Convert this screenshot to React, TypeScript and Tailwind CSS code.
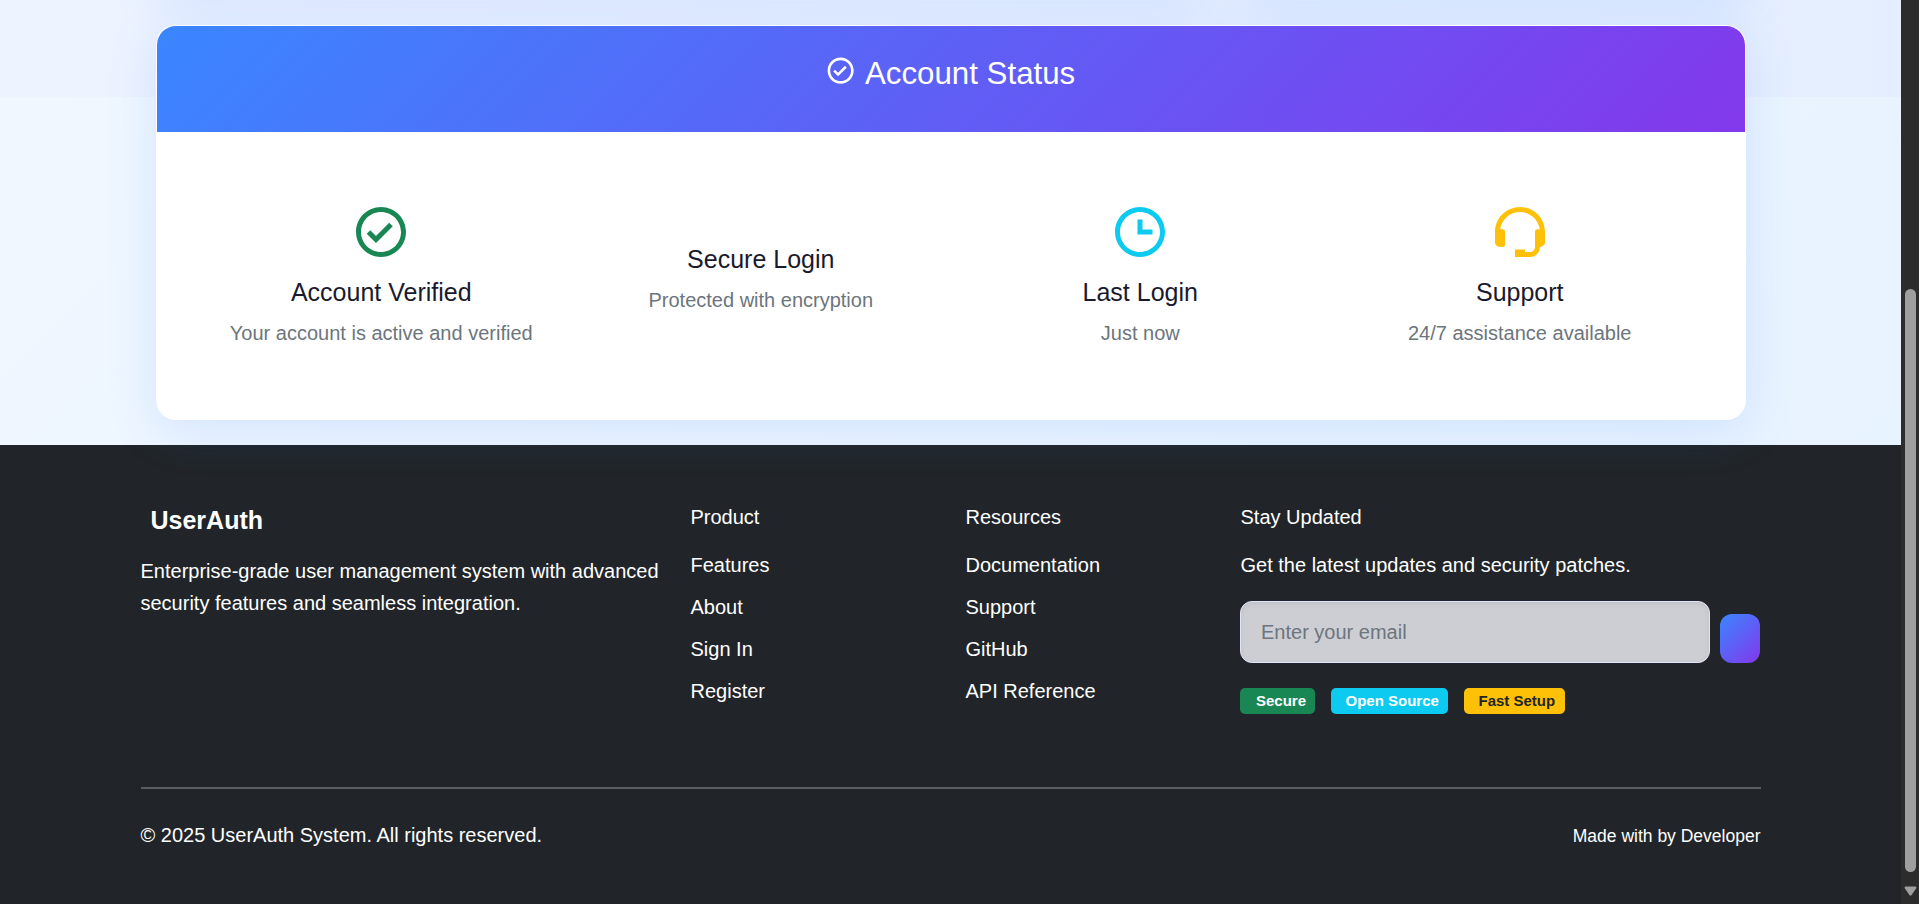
import { BiCheckCircle, BiSupport, BiTime } from "react-icons/bi";
import type { ReactNode } from "react";

type StatusItem = {
  title: string;
  text: string;
  icon?: ReactNode;
};

const statusItems: StatusItem[] = [
  {
    title: "Account Verified",
    text: "Your account is active and verified",
    icon: <BiCheckCircle className="size-[60px] text-[#198754]" />,
  },
  { title: "Secure Login", text: "Protected with encryption" },
  {
    title: "Last Login",
    text: "Just now",
    icon: <BiTime className="size-[60px] text-[#0dcaf0]" />,
  },
  {
    title: "Support",
    text: "24/7 assistance available",
    icon: <BiSupport className="size-[60px] text-[#ffc107]" />,
  },
];

const productLinks = ["Features", "About", "Sign In", "Register"];
const resourceLinks = ["Documentation", "Support", "GitHub", "API Reference"];

function StatusCard() {
  return (
    <section className="relative z-10 mx-[155.5px] h-[395px] overflow-hidden rounded-[20px] border border-white/90 bg-white shadow-[0_10px_50px_rgba(58,134,255,0.15)]">
      <header className="flex h-[106px] justify-center bg-[linear-gradient(135deg,#3a86ff_0%,#8338ec_100%)] pt-[29px] pr-px text-white">
        <BiCheckCircle className="mr-[9px] size-[31.25px]" />
        <h3 className="text-[31.25px] leading-[38.5px] font-normal">Account Status</h3>
      </header>
      <div className="grid h-[287px] grid-cols-4 items-center px-[35px] pt-[10px] text-center">
        {statusItems.map((item) => (
          <div key={item.title} className="flex flex-col items-center">
            {item.icon && <div className="mb-[5px]">{item.icon}</div>}
            <h5 className="mt-[10px] text-[25px] leading-[30px] font-normal text-[#1a1a2e]">{item.title}</h5>
            <p className="mt-[10px] mb-[11px] text-[20px] leading-8 text-[#6c757d]">{item.text}</p>
          </div>
        ))}
      </div>
    </section>
  );
}

function LinkColumn({ title, links }: { title: string; links: string[] }) {
  return (
    <div className="w-[275px] pt-px">
      <h6 className="mb-4 text-[20px] leading-8">{title}</h6>
      <ul className="flex flex-col gap-[10px]">
        {links.map((link) => (
          <li key={link} className="text-[20px] leading-8">
            <a href="#">{link}</a>
          </li>
        ))}
      </ul>
    </div>
  );
}

function Footer() {
  return (
    <footer className="mt-[25px] h-[459px] bg-[#212529] px-[140.5px] pt-[55px] text-white">
      <div className="-mr-[30px] flex h-[287px]">
        <div className="w-[550px]">
          <h5 className="ml-[10px] text-[25px] leading-[40px] font-bold">UserAuth</h5>
          <p className="mt-[15px] w-[530px] text-[20px] leading-8">
            Enterprise-grade user management system with advanced security features and seamless integration.
          </p>
        </div>
        <LinkColumn title="Product" links={productLinks} />
        <LinkColumn title="Resources" links={resourceLinks} />
        <div className="w-[520px] pt-px">
          <h6 className="mb-4 text-[20px] leading-8">Stay Updated</h6>
          <p className="text-[20px] leading-8">Get the latest updates and security patches.</p>
          <div className="mt-5 -ml-[0.5px] flex items-end gap-[10px]">
            <input
              className="h-[62px] w-[470px] rounded-[12px] border border-[#dfe4fb] bg-[#cdced3] px-5 text-[20px] shadow-[inset_0_2px_5px_rgba(0,0,0,0.06)] outline-none placeholder:text-[#6c757d]"
              placeholder="Enter your email"
            />
            <button
              aria-label="Subscribe"
              className="h-[49px] w-10 rounded-[12px] bg-[linear-gradient(135deg,#3a86ff_0%,#8338ec_100%)]"
            />
          </div>
          <div className="mt-[25px] -ml-[0.5px] flex gap-4 text-[15px] leading-[26px] font-bold">
            <span className="w-[75px] rounded-[5px] bg-[#198754] pl-4">Secure</span>
            <span className="w-[117px] rounded-[5px] bg-[#0dcaf0] pl-[14.5px]">Open Source</span>
            <span className="w-[101px] rounded-[5px] bg-[#ffc107] pl-[14.5px] text-[#212529]">Fast Setup</span>
          </div>
        </div>
      </div>
      <div className="flex items-baseline justify-between border-t-2 border-[#595c5f] pt-[30px]">
        <p className="text-[20px] leading-8">© 2025 UserAuth System. All rights reserved.</p>
        <small className="text-[17.5px] leading-7">Made with by Developer</small>
      </div>
    </footer>
  );
}

function Scrollbar() {
  return (
    <div className="flex w-[18px] flex-col items-center bg-[#2c2c2c] pt-[289px]">
      <div className="h-[583px] w-[11px] rounded-full bg-[#9f9f9f]" />
      <svg className="mt-[14px] h-[10px] w-[13px]" viewBox="0 0 13 10">
        <path d="M1.6 0.6h9.8c.9 0 1.3.9.8 1.6L7.6 9c-.5.8-1.7.8-2.2 0L.8 2.2C.3 1.5.7.6 1.6.6z" fill="#9f9f9f" />
      </svg>
    </div>
  );
}

export default function App() {
  return (
    <div className="flex h-[904px] w-full overflow-hidden font-['Liberation_Sans',Arial,sans-serif]">
      <div className="relative w-[1901px] overflow-hidden bg-[linear-gradient(135deg,#f0f7ff_0%,#e6f2ff_100%)]">
        <div className="absolute inset-x-0 top-0 h-[97px] bg-[linear-gradient(90deg,#edf3ff_0%,#e4eeff_100%)]" />
        <div className="relative">
          <div className="-mt-[305px] mb-[30px] flex h-[300px] gap-[30px] px-[155.5px]">
            <div className="w-[1050px] rounded-[20px] bg-white shadow-[0_10px_50px_rgba(58,134,255,0.13)]" />
            <div className="flex-1 rounded-[20px] bg-white shadow-[0_10px_50px_rgba(58,134,255,0.13)]" />
          </div>
          <StatusCard />
          <Footer />
        </div>
      </div>
      <Scrollbar />
    </div>
  );
}
